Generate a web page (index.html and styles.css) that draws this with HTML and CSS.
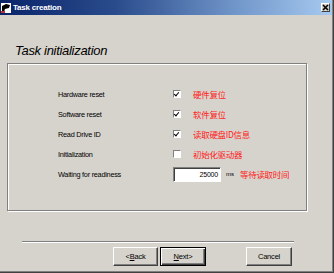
FILE: index.html
```html
<!DOCTYPE html>
<html>
<head>
<meta charset="utf-8">
<link rel="stylesheet" href="styles.css">
</head>
<body>
<div class="window">
  <div class="titlebar">
    <svg class="app-icon" width="10" height="10" viewBox="0 0 10 10">
      <rect x="0" y="0" width="10" height="10" fill="#fff"/>
      <path d="M1 3 L5 1 L9 2 L8 5 L4 6 L3 9 L1 9 Z" fill="#000"/>
      <rect x="0" y="8" width="4" height="2" fill="#c03030"/>
    </svg>
    <span class="title">Task creation</span>
    <span class="close">
      <svg width="7" height="7" viewBox="0 0 7 7"><path d="M1 1 L6 6 M6 1 L1 6" stroke="#000" stroke-width="1.6"/></svg>
    </span>
  </div>
  <div class="content">
    <div class="heading">Task initialization</div>
    <div class="group">
      <div class="row">
        <span class="label">Hardware reset</span>
        <span class="check checked"></span>
        <span class="cn">硬件复位</span>
      </div>
      <div class="row">
        <span class="label">Software reset</span>
        <span class="check checked"></span>
        <span class="cn">软件复位</span>
      </div>
      <div class="row">
        <span class="label">Read Drive ID</span>
        <span class="check checked"></span>
        <span class="cn">读取硬盘ID信息</span>
      </div>
      <div class="row">
        <span class="label">Initialization</span>
        <span class="check"></span>
        <span class="cn">初始化驱动器</span>
      </div>
      <div class="row">
        <span class="label">Waiting for readiness</span>
        <span class="input">25000</span>
        <span class="unit">ms</span>
        <span class="cn cn-wait">等待读取时间</span>
      </div>
    </div>
    <div class="separator"></div>
    <div class="buttons">
      <span class="btn">&lt;<u>B</u>ack</span>
      <span class="btn default"><u>N</u>ext&gt;</span>
      <span class="btn cancel">Cancel</span>
    </div>
  </div>
</div>
</body>
</html>
```
FILE: styles.css
```css
html, body {
  margin: 0;
  padding: 0;
  background: #d6d3cc;
}
.window {
  width: 334px;
  height: 273px;
  box-sizing: border-box;
  background: #d6d3cc;
  border-right: 1px solid #404040;
  border-bottom: 1px solid #404040;
  box-shadow: inset -1px -1px 0 #808080;
  display: flex;
  flex-direction: column;
  font-family: "Liberation Sans", Arial, sans-serif;
  overflow: hidden;
}
.titlebar {
  height: 15px;
  margin-right: 1px;
  background: linear-gradient(to right, #0a246a 0%, #2a4c8c 35%, #6f94c8 70%, #a6caf0 100%);
  display: flex;
  align-items: center;
  padding-left: 1px;
  flex-shrink: 0;
}
.app-icon {
  display: block;
  margin-right: 2px;
}
.title {
  color: #fff;
  font-weight: bold;
  font-size: 8px;
  letter-spacing: -0.2px;
  flex: 1;
}
.close {
  width: 9px;
  height: 9px;
  margin-right: 2px;
  box-sizing: border-box;
  background: #d4d0c8;
  border-top: 1px solid #fff;
  border-left: 1px solid #fff;
  border-right: 1px solid #404040;
  border-bottom: 1px solid #404040;
  display: flex;
  align-items: center;
  justify-content: center;
}
.close svg { display: block; }
.content {
  display: flex;
  flex-direction: column;
}
.heading {
  margin: 28px 0 0 15px;
  font-size: 13px;
  line-height: 15px;
  font-style: italic;
  letter-spacing: -0.3px;
  color: #000;
}
.group {
  margin: 5px 0 0 7px;
  width: 300px;
  height: 148px;
  box-sizing: border-box;
  border: 1px solid #808080;
  box-shadow: inset 1px 1px 0 #fff, 1px 1px 0 #fff;
  padding: 20px 0 0 50px;
  display: flex;
  flex-direction: column;
}
.row {
  height: 20px;
  display: flex;
  align-items: center;
}
.label {
  width: 115px;
  font-size: 7.3px;
  letter-spacing: -0.25px;
  color: #000;
}
.check {
  width: 8px;
  height: 8px;
  box-sizing: border-box;
  background: #fff;
  border-top: 1px solid #808080;
  border-left: 1px solid #808080;
  border-right: 1px solid #fff;
  border-bottom: 1px solid #fff;
  position: relative;
  margin-right: 12px;
}
.check.checked::after {
  content: "";
  position: absolute;
  left: 1px;
  top: 0px;
  width: 2px;
  height: 4px;
  border-right: 1.5px solid #000;
  border-bottom: 1.5px solid #000;
  transform: rotate(40deg);
}
.cn {
  font-family: "Noto Sans CJK SC", sans-serif;
  font-size: 8.5px;
  letter-spacing: -0.3px;
  color: #ff2020;
}
.input {
  width: 48px;
  height: 15px;
  box-sizing: border-box;
  background: #fff;
  border-top: 1px solid #808080;
  border-left: 1px solid #808080;
  border-right: 1px solid #fff;
  border-bottom: 1px solid #fff;
  box-shadow: inset 1px 1px 0 #404040;
  font-size: 7px;
  letter-spacing: -0.2px;
  text-align: right;
  padding-right: 2px;
  line-height: 13px;
}
.unit {
  font-size: 6px;
  margin-left: 5px;
  color: #000;
}
.cn-wait {
  margin-left: 6px;
}
.separator {
  margin: 30px 0 0 22px;
  width: 272px;
  height: 0;
  border-top: 1px solid #808080;
  border-bottom: 1px solid #fff;
}
.buttons {
  margin-top: 4px;
  padding-left: 113px;
  display: flex;
}
.btn {
  width: 45px;
  height: 19px;
  box-sizing: border-box;
  border-top: 1px solid #fff;
  border-left: 1px solid #fff;
  border-right: 1px solid #404040;
  border-bottom: 1px solid #404040;
  box-shadow: inset -1px -1px 0 #808080;
  display: flex;
  align-items: center;
  justify-content: center;
  font-size: 7.5px;
  letter-spacing: -0.2px;
  color: #000;
}
.btn.default {
  width: 46px;
  margin-left: 2px;
  border: 1px solid #000;
  box-shadow: inset 1px 1px 0 #fff, inset -1px -1px 0 #404040, inset -2px -2px 0 #808080;
}
.btn.cancel {
  width: 46px;
  margin-left: 40px;
}
```
